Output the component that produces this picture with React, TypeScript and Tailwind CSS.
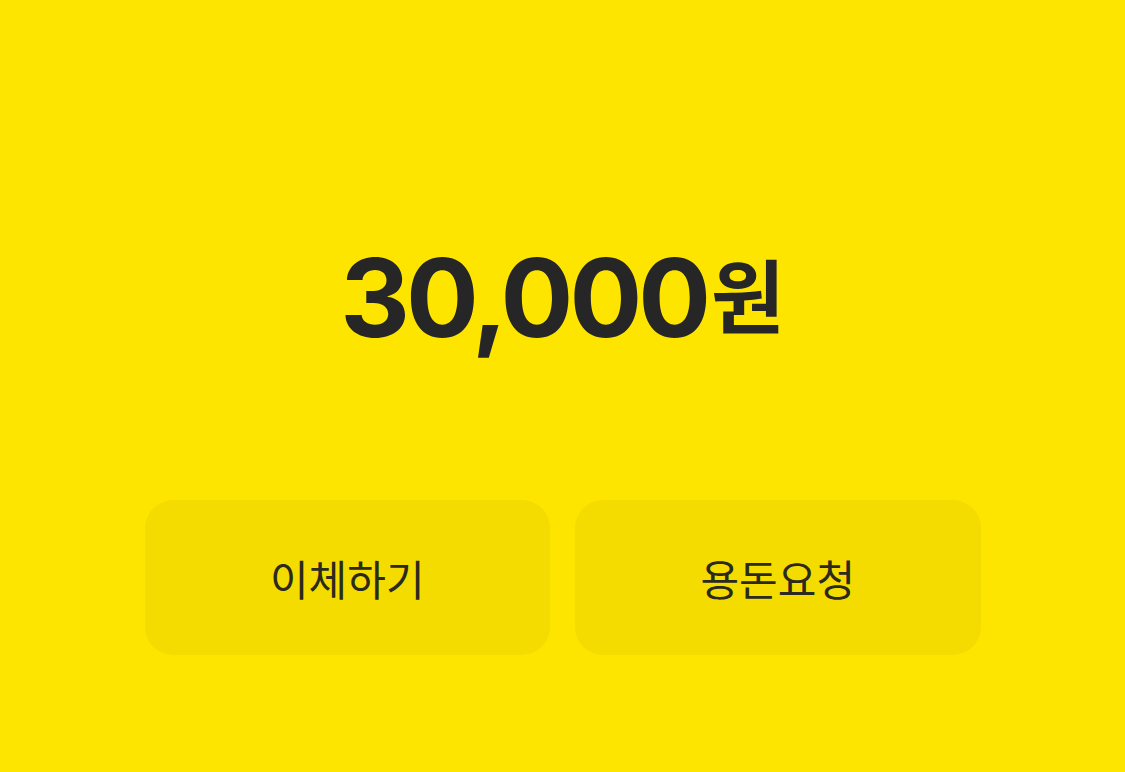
import React from 'react'

const ACTIONS = ['이체하기', '용돈요청']

export default function App() {
  return (
    <div className="min-h-[772px] w-full bg-[#fee500] flex flex-col items-center">
      {/* balance */}
      <div className="pt-[244px] flex items-baseline text-[#262626]">
        <span
          className="text-[108px] font-bold leading-none tracking-[-4px]"
          style={{ fontFamily: 'Inter, "Liberation Sans", sans-serif' }}
        >
          30,000
        </span>
        <span
          className="text-[80px] font-bold leading-none ml-[4px] -translate-y-[10px]"
          style={{ fontFamily: '"Noto Sans CJK KR", sans-serif' }}
        >
          원
        </span>
      </div>

      {/* actions */}
      <div className="mt-[148px] w-[836px] grid grid-cols-2 gap-[25px]">
        {ACTIONS.map((label) => (
          <button
            key={label}
            className="h-[155px] rounded-[28px] bg-[#f5dc00] flex items-center justify-center text-[42px] text-[#2b2a1c]"
            style={{ fontFamily: '"Noto Sans CJK KR", sans-serif' }}
          >
            {label}
          </button>
        ))}
      </div>
    </div>
  )
}
